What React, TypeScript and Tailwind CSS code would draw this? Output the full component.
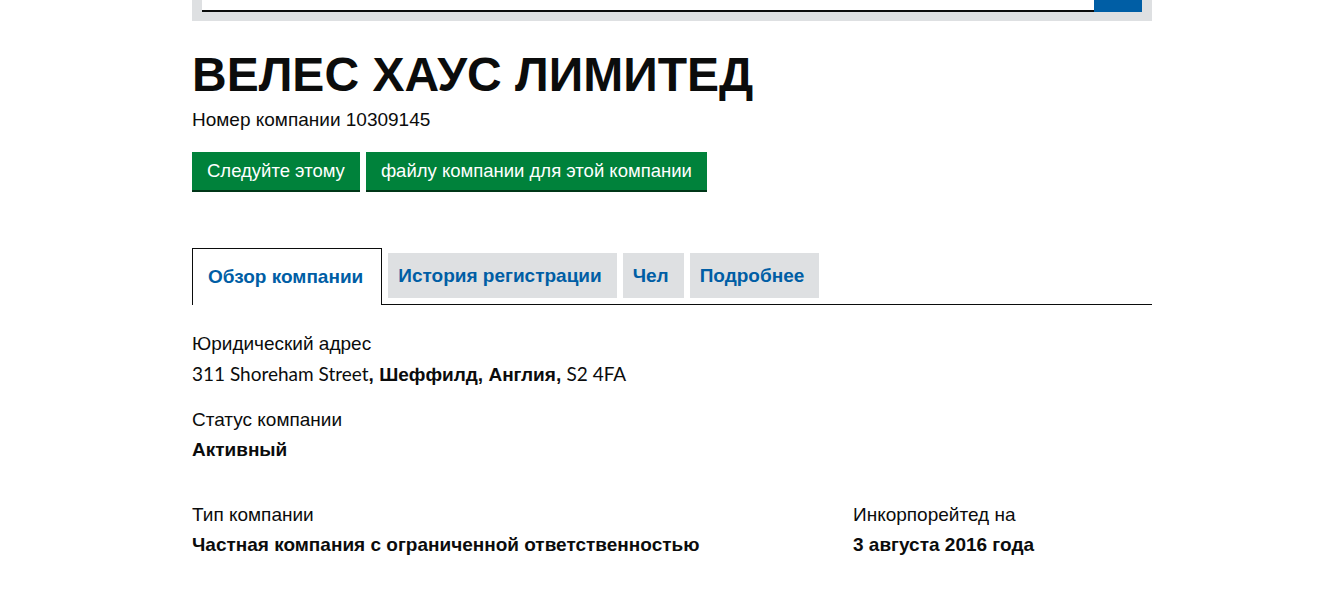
export default function App() {
  const tabs = ['История регистрации', 'Чел', 'Подробнее'];

  return (
    <div className="min-h-[614px] bg-white font-['Liberation_Sans',Arial,sans-serif] text-[#0b0c0c]">
      <div className="ml-[192px] w-[960px]">
        {/* search bar */}
        <div className="flex h-[21px] bg-[#dee0e2] px-[10px]">
          <div className="h-[12px] flex-1 border-b-2 border-[#0b0c0c] bg-white" />
          <div className="h-[12px] w-[48px] bg-[#005ea5]" />
        </div>

        {/* header */}
        <h1 className="mt-[29px] text-[48px] font-bold leading-[50px]">ВЕЛЕС ХАУС ЛИМИТЕД</h1>
        <p className="mt-[7px] text-[19px] leading-[25px]">Номер компании 10309145</p>

        <div className="mt-[20px] flex gap-[6px]">
          <button className="h-[38px] bg-[#00823b] px-[15px] text-[18.5px] text-white shadow-[0_2px_0_#003618]">
            Следуйте этому
          </button>
          <button className="h-[38px] bg-[#00823b] px-[15px] text-[18.5px] text-white shadow-[0_2px_0_#003618]">
            файлу компании для этой компании
          </button>
        </div>

        {/* tabs */}
        <div className="mt-[58px] flex items-end border-b border-[#0b0c0c]">
          <div className="-mb-px flex h-[57px] items-center border border-b-0 border-[#0b0c0c] bg-white pl-[15px] pr-[18px] text-[19px] font-bold text-[#005ea5]">
            Обзор компании
          </div>
          {tabs.map((t) => (
            <div
              key={t}
              className="mb-[6px] ml-[6px] flex h-[45px] items-center bg-[#dee0e2] pl-[10px] pr-[15px] pt-[2px] text-[19px] font-bold text-[#005ea5]"
            >
              {t}
            </div>
          ))}
        </div>

        {/* details */}
        <dl className="mt-[24px] text-[19px] leading-[30px]">
          <dt>Юридический адрес</dt>
          <dd>
            <span className="font-['Lato',sans-serif]">311 Shoreham Street</span>
            <span className="font-bold">, Шеффилд, Англия, </span>
            <span className="font-['Lato',sans-serif]">S2 4FA</span>
          </dd>
          <dt className="mt-[15px]">Статус компании</dt>
          <dd className="font-bold">Активный</dd>
        </dl>

        <div className="mt-[35px] flex text-[19px] leading-[30px]">
          <dl className="w-[661px]">
            <dt>Тип компании</dt>
            <dd className="font-bold">Частная компания с ограниченной ответственностью</dd>
          </dl>
          <dl>
            <dt>Инкорпорейтед на</dt>
            <dd className="font-bold">3 августа 2016 года</dd>
          </dl>
        </div>
      </div>
    </div>
  );
}
